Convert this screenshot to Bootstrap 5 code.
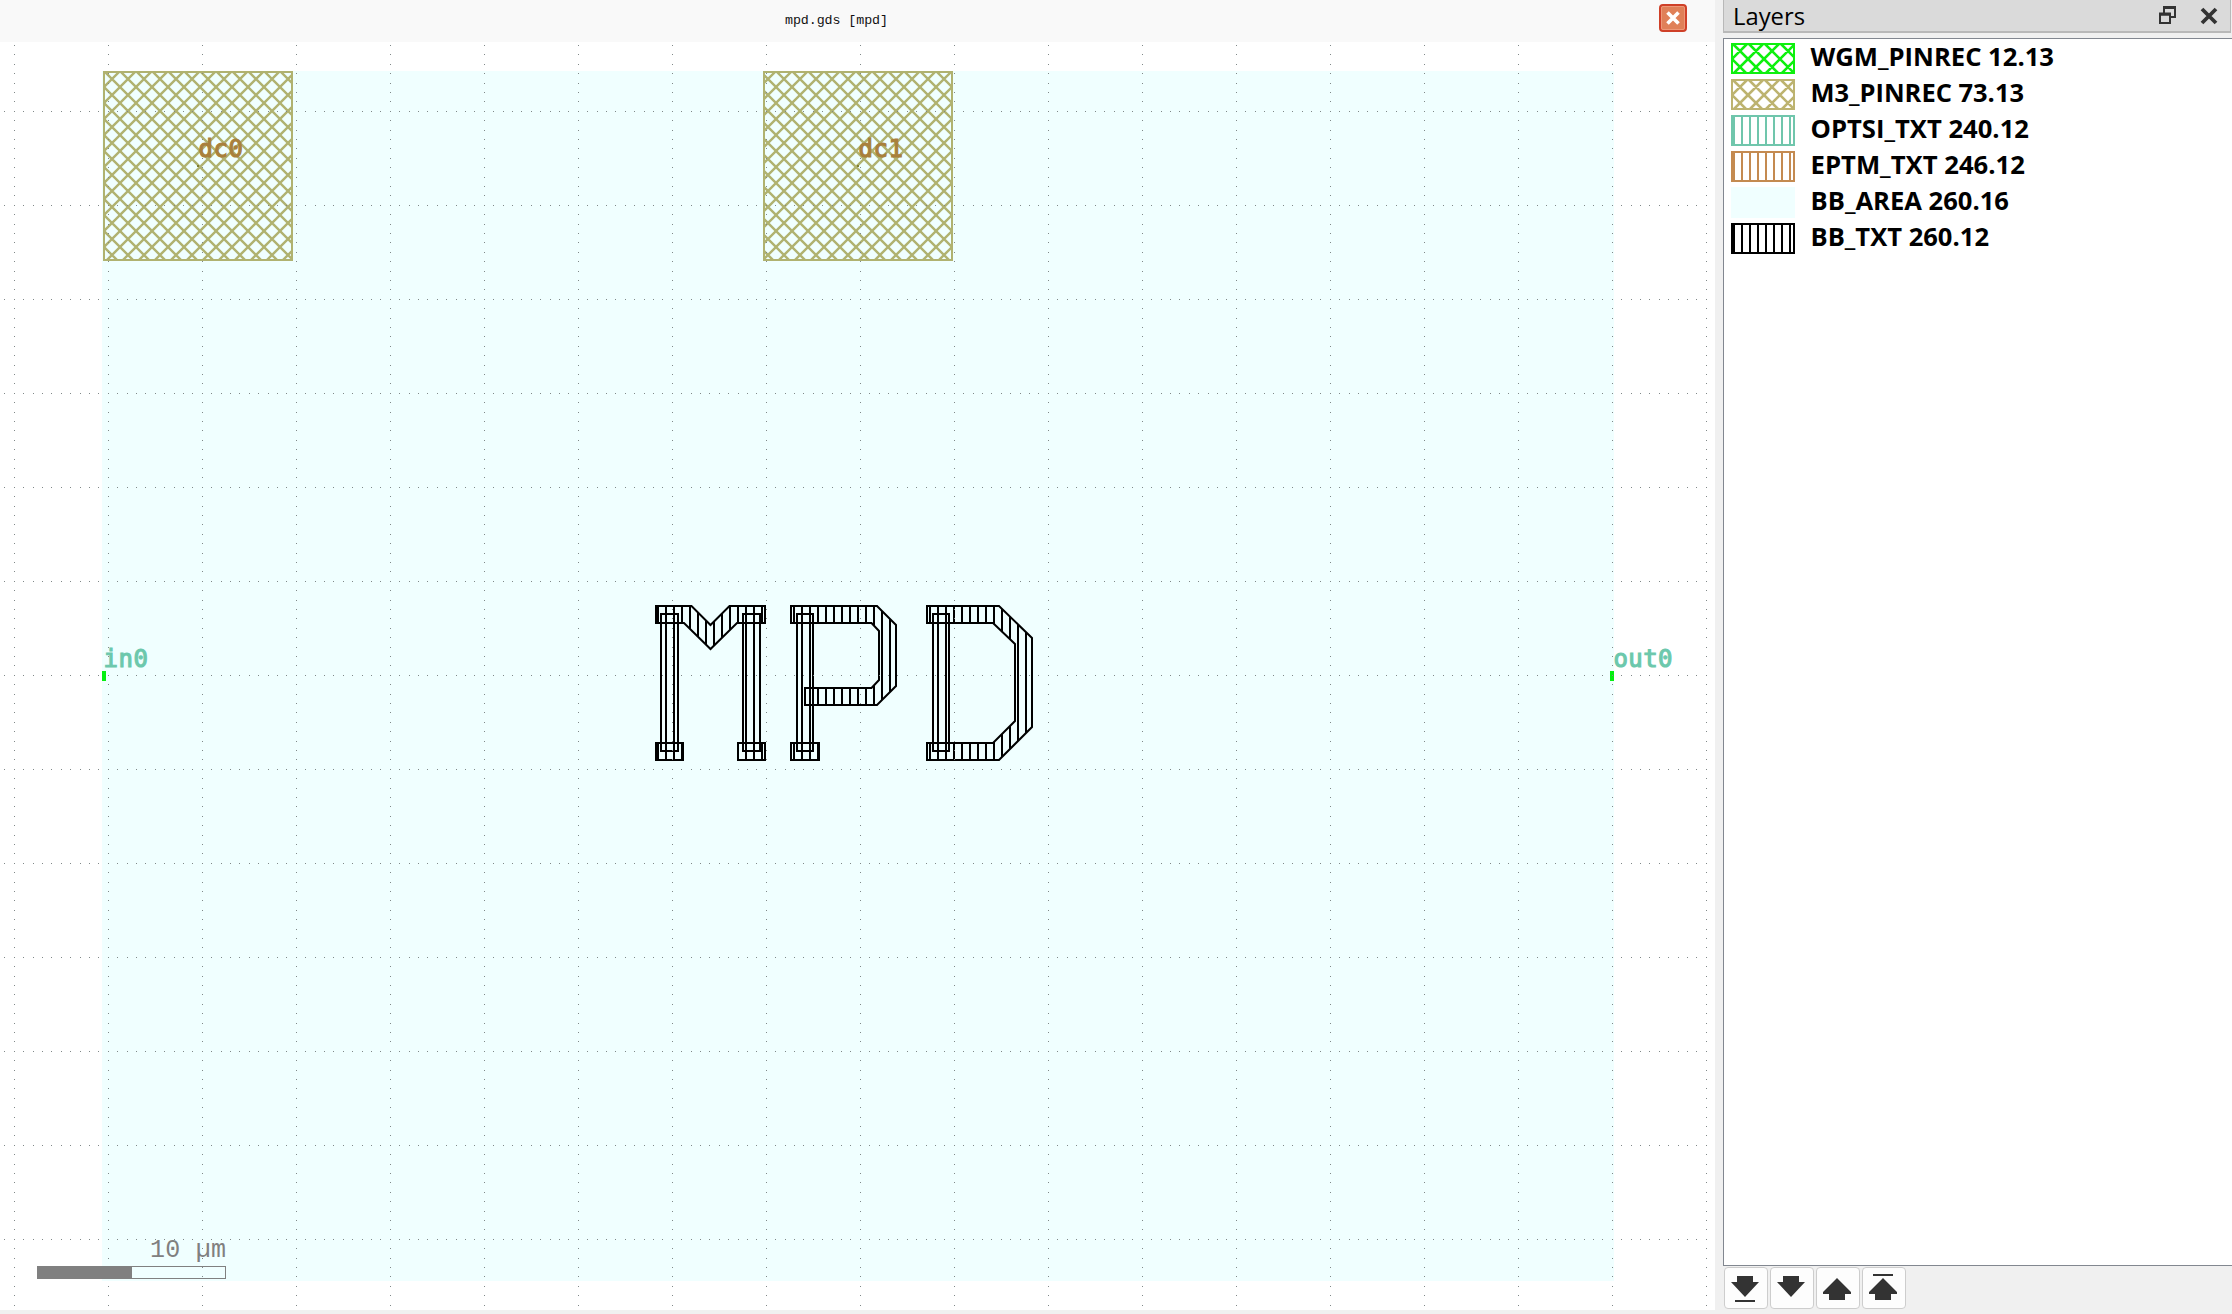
<!DOCTYPE html>
<html lang="en">
<head>
<meta charset="utf-8">
<title>mpd.gds [mpd]</title>
<link href="https://cdn.jsdelivr.net/npm/bootstrap@5.3.0/dist/css/bootstrap.min.css" rel="stylesheet">
<script src="https://cdn.jsdelivr.net/npm/bootstrap@5.3.0/dist/js/bootstrap.bundle.min.js"></script>
<style>
body{background:#f0f0f0;color:#000;width:2232px;height:1314px}
svg{display:block}
.view-pane{width:1715px;height:1310px;flex:none}
.view-title{height:42px;background:#f9f9f9;padding-right:28px}
.view-title .caption{padding-left:14px}
.close-tab{width:28px;height:28px;margin-top:-6px}
.layout-svg text{font-family:"DejaVu Sans Mono",monospace}
.layout-svg .scale-text{font-family:"Liberation Mono",monospace}
.dock{margin-left:8px;width:509px;height:1314px}
.dock-head{height:33px;width:508px;background:#dadada;border:1px solid #b8b8b8;border-width:0 1px 2px 1px;padding:0 11px 0 9px}
.layer-list{margin-top:5px;height:1228px;border:1px solid #828790;border-right:0;padding:4px 0 0 7px;background:#fff}
.layer-row{height:36px;gap:15px}
.layer-name{margin-top:-4px;overflow:visible}
.tool-row{padding:1px 0 0 1px;gap:2px}
.tool-btn{width:44px;height:42px;background:#fdfdfd;border:1px solid #cdcdcd;border-radius:4px;padding:0}
</style>
</head>
<body class="d-flex overflow-hidden">
<main class="view-pane bg-white d-flex flex-column">
  <header class="view-title d-flex align-items-center">
    <div class="caption flex-grow-1"><svg width="112" height="26" class="mx-auto"><text x="4" y="16" textLength="103" font-family="Liberation Mono" font-size="13.33" fill="#111">mpd.gds [mpd]</text></svg></div>
    <svg class="close-tab" viewBox="0 0 28 28"><rect x="1" y="1" width="26" height="26" rx="3" fill="#e08058" stroke="#cf4028" stroke-width="2"/><rect x="2.500" y="2.500" width="23" height="23" rx="1.500" fill="none" stroke="#ee9878"/><path d="M8.500 8.500L19.500 19.500M19.500 8.500L8.500 19.500" stroke="#fff" stroke-width="3.600"/></svg>
  </header>
  <svg class="layout-svg" width="1715" height="1268" viewBox="0 42 1715 1268">
    <defs>
      <pattern id="mesh" width="16" height="16" patternUnits="userSpaceOnUse" x="8" y="7"><path d="M-2 -2L18 18M-2 18L18 -2M14 -2L18 2M-2 14L2 18M14 18L18 14M-2 2L2 -2" stroke="#b0b270" stroke-width="2.400"/></pattern>
      <pattern id="bars" width="8" height="8" patternUnits="userSpaceOnUse"><rect x="1" width="2" height="8"/></pattern>
    </defs>
    <rect x="102" y="71" width="1512" height="1210" fill="#f0ffff"/>
    <g fill="url(#mesh)" stroke="#b0b270" stroke-width="2"><rect x="104" y="72" width="188" height="188"/><rect x="764" y="72" width="188" height="188"/></g>
    <g fill="#05f010"><rect x="102" y="671" width="4" height="10"/><rect x="1610" y="671" width="4" height="10"/></g>
    <g fill="url(#bars)" stroke="#000" stroke-width="2">
      <path d="M656 606H691.500L710.500 625L729.500 606H765V623H737L710.500 649L684 623H656Z"/>
      <path d="M661 614H678V751H661ZM743 614H760V751H743ZM656 743H683V760H656ZM738 743H765V760H738Z"/>
      <path d="M791 606H877L896 625V686L877 705H805V688H871.500L879 680V631L871.500 623H791Z"/>
      <path d="M797 614H813V751H797ZM791 743H819V760H791Z"/>
      <path d="M927 606H999L1032 638V727L999 760H927V743H993L1015 721V644L993 623H927Z"/>
      <path d="M933 614H949V751H933Z"/>
    </g>
    <path id="dots" fill="#808888" shape-rendering="crispEdges"/>
    <g font-size="24" stroke-width="1.100">
      <text x="198.500" y="156.500" textLength="44.500" fill="#a9803c" stroke="#a9803c">dc0</text>
      <text x="858.500" y="156.500" textLength="44.500" fill="#a9803c" stroke="#a9803c">dc1</text>
      <text x="103.500" y="666.500" textLength="44.500" fill="#6cc8ac" stroke="#6cc8ac">in0</text>
      <text x="1613.500" y="666.500" textLength="59" fill="#6cc8ac" stroke="#6cc8ac">out0</text>
    </g>
    <path d="M197 165h2v2h-2zM857 165h2v2h-2z" fill="#7d7d30"/>
    <text class="scale-text" x="150" y="1257" font-size="25" textLength="76" fill="#808080">10 µm</text>
    <rect x="37.500" y="1266.500" width="188" height="12" fill="none" stroke="#808080"/><rect x="37" y="1266" width="95" height="13" fill="#808080"/>
  </svg>
</main>
<aside class="dock d-flex flex-column">
  <div class="dock-head d-flex align-items-center">
    <svg width="120" height="32"><text x="0" y="25" textLength="72" lengthAdjust="spacingAndGlyphs" font-family="Open Sans" font-size="24">Layers</text></svg>
    <svg class="ms-auto" width="62" height="32" fill="none" stroke="#333"><path d="M7 13V7.500H18V17H14" stroke-width="2"/><path d="M6 7.500H19" stroke-width="3"/><path d="M3 14.500H13V23H3Z" stroke-width="2"/><path d="M2 14H14" stroke-width="3"/><path d="M45 9L59 23M59 9L45 23" stroke-width="3.800"/></svg>
  </div>
  <div class="layer-list" id="layers"></div>
  <div class="tool-row d-flex">
    <button class="tool-btn"><svg width="42" height="40" fill="#333"><path d="M12 8H28V14H34L20 29L6 14H12ZM10 32H30V34H10Z"/></svg></button>
    <button class="tool-btn"><svg width="42" height="40" fill="#333"><path d="M12 8H28V14H34L20 29L6 14H12Z"/></svg></button>
    <button class="tool-btn"><svg width="42" height="40" fill="#333"><path d="M20 10L34 24V26H28V32H12V26H6V24Z"/></svg></button>
    <button class="tool-btn"><svg width="42" height="40" fill="#333"><path d="M20 10L34 24V26H28V32H12V26H6V24ZM10 6H30V8H10Z"/></svg></button>
  </div>
</aside>
<script>
// Grid: lines every 94 px, ten dots per cell
let d = '';
const dot = (x, y) => { d += `M${Math.floor(x)} ${Math.floor(y)}h1v1h-1z`; };
for (let gx = 14; gx < 1715; gx += 94) for (let k = -7; k < 128; k++) dot(gx, 111.3 + k * 9.4);
for (let gy = 111; gy < 1310; gy += 94) for (let k = -1; k < 181; k++) dot(14.3 + k * 9.4, gy);
document.getElementById('dots').setAttribute('d', d);

// name, colour, fill kind (x mesh, v bars, f flat), text width
const layers = [
  ['WGM_PINREC 12.13', '#0ef00e', 'x', 242], ['M3_PINREC 73.13', '#bdb370', 'x', 212],
  ['OPTSI_TXT 240.12', '#70c6ac', 'v', 217], ['EPTM_TXT 246.12', '#c48a50', 'v', 213],
  ['BB_AREA 260.16', '#f0ffff', 'f', 197], ['BB_TXT 260.12', '#000', 'v', 177]];
document.getElementById('layers').innerHTML = layers.map(([name, c, kind, w]) => {
  let p = '';
  if (kind === 'x') for (let k = -48; k < 112; k += 16) p += `M${k + 1} 0l31 31M${k + 2} 31l31 -31`;
  if (kind === 'v') for (let k = 3; k < 64; k += 8) p += `M${k} 0v31`;
  return `<div class="layer-row d-flex"><svg width="64" height="31"><rect x="1" y="1" width="62" height="29" fill="${kind === 'f' ? c : '#fff'}" stroke="${c}" stroke-width="2"/><path d="${p}" stroke="${c}" stroke-width="${kind === 'x' ? 2.6 : 2}" fill="none"/></svg><svg class="layer-name" width="${w + 20}" height="40"><text x="0.5" y="27" textLength="${w + 1.5}" lengthAdjust="spacingAndGlyphs" font-family="Open Sans" font-weight="700" font-size="24.5">${name}</text></svg></div>`;
}).join('');
</script>
</body>
</html>
